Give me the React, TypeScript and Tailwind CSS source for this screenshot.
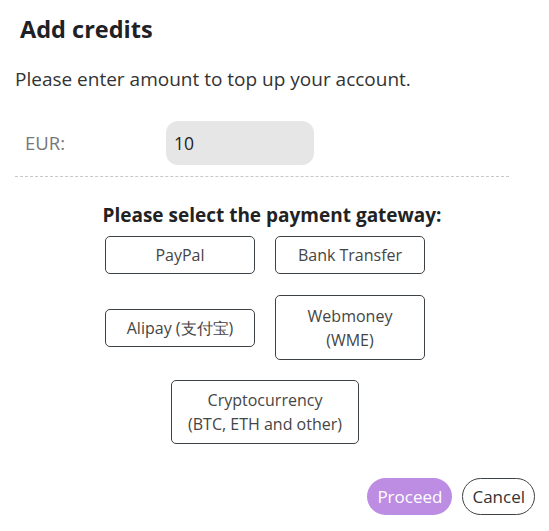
import React from "react";

const btn =
  "flex items-center justify-center text-center border border-[#3d4246] rounded-[5px] bg-white text-[#454545] text-[16px] leading-[24px]";

export default function App() {
  return (
    <div className="w-[549px] h-[531px] bg-white text-[#212529] font-['Open_Sans','Noto_Sans',sans-serif] overflow-hidden">
      <div className="px-[15px]">
        <h2 className="pt-[14px] pl-[5px] text-[23.5px] font-bold leading-[30px] text-[#1e2125]">Add credits</h2>
        <p className="mt-[23px] text-[19px] leading-[24px] text-[#333]">
          Please enter amount to top up your account.
        </p>
        <div className="mt-[30px] flex items-center">
          <label className="w-[151px] pl-[10px] text-[18.5px] text-[#777]">EUR:</label>
          <input
            defaultValue="10"
            className="w-[148px] h-[44px] rounded-[12px] bg-[#e6e6e6] px-[8px] text-[17.5px] text-[#222] outline-none"
          />
        </div>
        <div className="mt-[11px] w-[494px] border-t border-dashed border-[#c8c8c8]" />
      </div>
      <div className="w-[530px] flex flex-col items-center">
        <div className="mt-[26px] ml-[14px] text-[19px] font-bold leading-[24px] text-[#222]">
          Please select the payment gateway:
        </div>
        <div className="mt-[9px] grid grid-cols-[150px_150px] gap-x-[20px] gap-y-[21px] items-center">
          <button className={`${btn} h-[38px]`}>PayPal</button>
          <button className={`${btn} h-[38px]`}>Bank Transfer</button>
          <button className={`${btn} h-[38px]`}>Alipay (支付宝)</button>
          <button className={`${btn} h-[65px]`}>
            Webmoney
            <br />
            (WME)
          </button>
        </div>
        <button className={`${btn} mt-[20px] w-[188px] h-[64px]`}>
          Cryptocurrency
          <br />
          (BTC, ETH and other)
        </button>
      </div>
      <div className="mt-[34px] flex justify-end gap-[10px] pr-[14px]">
        <button className="h-[37px] px-[10px] rounded-full bg-[#bd8ce3] text-white text-[17px]">Proceed</button>
        <button className="h-[37px] px-[9px] rounded-full border border-[#3d4246] text-[#333] text-[17px]">Cancel</button>
      </div>
    </div>
  );
}
